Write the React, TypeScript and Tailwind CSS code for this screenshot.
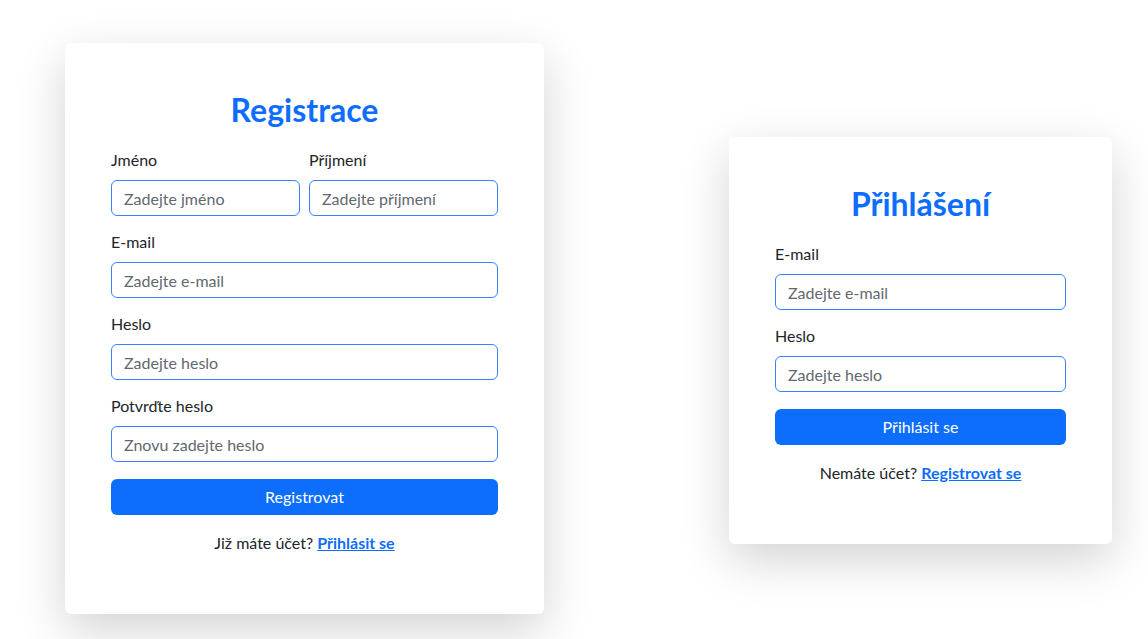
import React from 'react';

const font = { fontFamily: 'Lato, "Noto Sans", sans-serif' };

function Field({ label, placeholder, type = 'text' }: { label: string; placeholder: string; type?: string }) {
  return (
    <div className="mb-[14px]">
      <label className="block mb-2 text-base leading-6 text-[#212529]">{label}</label>
      <input
        type={type}
        placeholder={placeholder}
        className="block w-full h-9 px-3 rounded-md border border-[#3584fc] bg-white text-base text-[#212529] placeholder:text-[#62686e] outline-none"
      />
    </div>
  );
}

function Card({ width, title, children, footer }: { width: string; title: string; children: React.ReactNode; footer: React.ReactNode }) {
  return (
    <div className={`${width} bg-white rounded-md px-[46px] pt-[48px] pb-[59px] shadow-[0_16px_48px_rgba(0,0,0,0.175)]`}>
      <h2 className="text-center text-[32px] leading-[38px] font-bold text-[#0d6efd] mb-[19px]">{title}</h2>
      {children}
      <p className="mt-4 text-center text-base leading-6 text-[#212529]">{footer}</p>
    </div>
  );
}

export default function App() {
  return (
    <div className="h-screen overflow-hidden bg-white flex items-start pl-[65px] pt-[43px] gap-[185px]" style={font}>
      <Card
        width="w-[479px]"
        title="Registrace"
        footer={
          <>
            Již máte účet?{' '}
            <a href="#" className="font-bold text-[#0d6efd] underline">Přihlásit se</a>
          </>
        }
      >
        <div className="grid grid-cols-2 gap-x-[9px]">
          <Field label="Jméno" placeholder="Zadejte jméno" />
          <Field label="Příjmení" placeholder="Zadejte příjmení" />
        </div>
        <Field label="E-mail" placeholder="Zadejte e-mail" type="email" />
        <Field label="Heslo" placeholder="Zadejte heslo" type="password" />
        <Field label="Potvrďte heslo" placeholder="Znovu zadejte heslo" type="password" />
        <button className="mt-[3px] w-full h-9 rounded-md bg-[#0d6efd] text-white text-base">Registrovat</button>
      </Card>

      <div className="mt-[94px]">
        <Card
          width="w-[383px]"
          title="Přihlášení"
          footer={
            <>
              Nemáte účet?{' '}
              <a href="#" className="font-bold text-[#0d6efd] underline">Registrovat se</a>
            </>
          }
        >
          <Field label="E-mail" placeholder="Zadejte e-mail" type="email" />
          <Field label="Heslo" placeholder="Zadejte heslo" type="password" />
          <button className="mt-[3px] w-full h-9 rounded-md bg-[#0d6efd] text-white text-base">Přihlásit se</button>
        </Card>
      </div>
    </div>
  );
}
